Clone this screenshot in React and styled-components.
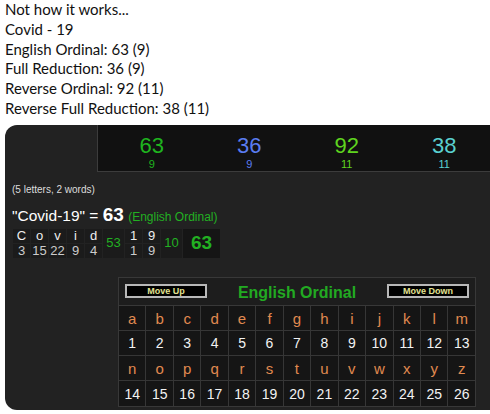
import React from 'react';
import styled, { createGlobalStyle } from 'styled-components';

const GlobalStyle = createGlobalStyle`
  body {
    margin: 0;
    padding: 0 0 0 5px;
    background: #fff;
    font-family: 'Lato', 'Open Sans', sans-serif;
    overflow: hidden;
  }
`;

const Intro = styled.div`
  font-size: 15px;
  line-height: 19.8px;
  color: #111;
`;

const Panel = styled.div`
  margin-top: 6px;
  width: 485px;
  height: 285px;
  background: #222;
  border-radius: 12px 0 0 12px;
  font-family: 'Liberation Sans', Arial, sans-serif;
  color: #ddd;
  overflow: hidden;
`;

const ScoreStrip = styled.div`
  margin-left: 92px;
  height: 46px;
  padding-left: 5px;
  display: flex;
  background: #111;
  border-left: 1px solid #3c3c3c;
  border-bottom: 1px solid #3c3c3c;
`;

const Score = styled.div`
  width: 97.5px;
  flex: none;
  display: flex;
  flex-direction: column;
  align-items: center;
  color: ${(p) => p.$color};
  .big {
    font-size: 22px;
    line-height: 22px;
    margin-top: 10px;
  }
  .small {
    font-size: 11px;
    line-height: 13px;
    margin-top: 1px;
  }
`;

const Body = styled.div`
  padding: 12px 0 0 7px;
`;

const Counts = styled.div`
  font-size: 10px;
  line-height: 12px;
  color: #ddd;
`;

const Phrase = styled.div`
  margin-top: 9px;
  font-size: 15.5px;
  line-height: 20px;
  color: #fff;
  b {
    font-size: 19px;
  }
  span {
    font-size: 12px;
    color: #22b022;
  }
`;

const Breakdown = styled.table`
  margin-top: 1px;
  border-collapse: collapse;
  background: #1b1b1b;
  td {
    padding: 0;
    text-align: center;
    border: 1px solid #222;
    height: 14px;
    font-size: 13px;
    line-height: 14px;
  }
`;

const Letter = styled.td`
  width: 17px;
  color: #eee;
`;

const Num = styled.td`
  width: 17px;
  color: #ccc;
`;

const Sum = styled.td`
  color: #22b022;
  font-size: ${(p) => (p.$big ? '19px' : '13px')} !important;
  font-weight: ${(p) => (p.$big ? 'bold' : 'normal')};
  background: ${(p) => (p.$big ? '#151515' : 'transparent')};
  width: ${(p) => (p.$big ? '37px' : '21px')};
`;

const Chart = styled.div`
  margin: 18px 0 0 106px;
  width: 356px;
  border: 1px solid #383838;
  background: #1d1d1d;
`;

const ChartHead = styled.div`
  height: 27px;
  padding: 0 6px;
  display: flex;
  align-items: center;
  justify-content: space-between;
  border-bottom: 1px solid #383838;
`;

const MoveButton = styled.div`
  width: 78px;
  height: 10px;
  border: 2px solid #b8b8b8;
  background: #000;
  color: #e2e290;
  font-size: 9px;
  font-weight: bold;
  line-height: 10px;
  text-align: center;
`;

const ChartTitle = styled.div`
  font-size: 16px;
  font-weight: bold;
  color: #22aa22;
  margin-top: 3px;
`;

const Grid = styled.table`
  border-collapse: collapse;
  width: 100%;
  background: #151515;
  td {
    border: 1px solid #363636;
    text-align: center;
    padding: 0;
    width: 27.3px;
  }
  tr:first-child td {
    border-top: none;
  }
  tr:last-child td {
    border-bottom: none;
  }
  td:first-child {
    border-left: none;
  }
  td:last-child {
    border-right: none;
  }
`;

const GridRow = styled.tr`
  height: 25px;
  td {
    color: ${(p) => (p.$letters ? '#e08a50' : '#f2f2f2')};
    font-size: ${(p) => (p.$letters ? '15px' : '14px')};
  }
`;

const scores = [
  { big: 63, small: 9, color: '#1fb41f' },
  { big: 36, small: 9, color: '#5a7cf0' },
  { big: 92, small: 11, color: '#5fd41f' },
  { big: 38, small: 11, color: '#5ad0d0' },
];

const alphabet = 'abcdefghijklmnopqrstuvwxyz'.split('');

export default function App() {
  const first = alphabet.slice(0, 13);
  const second = alphabet.slice(13);
  return (
    <>
      <GlobalStyle />
      <Intro>
        <div>Not how it works...</div>
        <div>Covid - 19</div>
        <div>English Ordinal: 63 (9)</div>
        <div>Full Reduction: 36 (9)</div>
        <div>Reverse Ordinal: 92 (11)</div>
        <div>Reverse Full Reduction: 38 (11)</div>
      </Intro>
      <Panel>
        <ScoreStrip>
          {scores.map((s) => (
            <Score key={s.big} $color={s.color}>
              <div className="big">{s.big}</div>
              <div className="small">{s.small}</div>
            </Score>
          ))}
        </ScoreStrip>
        <Body>
          <Counts>(5 letters, 2 words)</Counts>
          <Phrase>
            "Covid-19" = <b>63</b> <span>(English Ordinal)</span>
          </Phrase>
          <Breakdown>
            <tbody>
              <tr>
                {['C', 'o', 'v', 'i', 'd'].map((l) => (
                  <Letter key={l}>{l}</Letter>
                ))}
                <Sum rowSpan={2}>53</Sum>
                <Letter>1</Letter>
                <Letter>9</Letter>
                <Sum rowSpan={2}>10</Sum>
                <Sum rowSpan={2} $big>
                  63
                </Sum>
              </tr>
              <tr>
                {[3, 15, 22, 9, 4].map((n, i) => (
                  <Num key={i}>{n}</Num>
                ))}
                <Num>1</Num>
                <Num>9</Num>
              </tr>
            </tbody>
          </Breakdown>
          <Chart>
            <ChartHead>
              <MoveButton>Move Up</MoveButton>
              <ChartTitle>English Ordinal</ChartTitle>
              <MoveButton>Move Down</MoveButton>
            </ChartHead>
            <Grid>
              <tbody>
                <GridRow $letters>
                  {first.map((l) => (
                    <td key={l}>{l}</td>
                  ))}
                </GridRow>
                <GridRow>
                  {first.map((l, i) => (
                    <td key={l}>{i + 1}</td>
                  ))}
                </GridRow>
                <GridRow $letters>
                  {second.map((l) => (
                    <td key={l}>{l}</td>
                  ))}
                </GridRow>
                <GridRow>
                  {second.map((l, i) => (
                    <td key={l}>{i + 14}</td>
                  ))}
                </GridRow>
              </tbody>
            </Grid>
          </Chart>
        </Body>
      </Panel>
    </>
  );
}
